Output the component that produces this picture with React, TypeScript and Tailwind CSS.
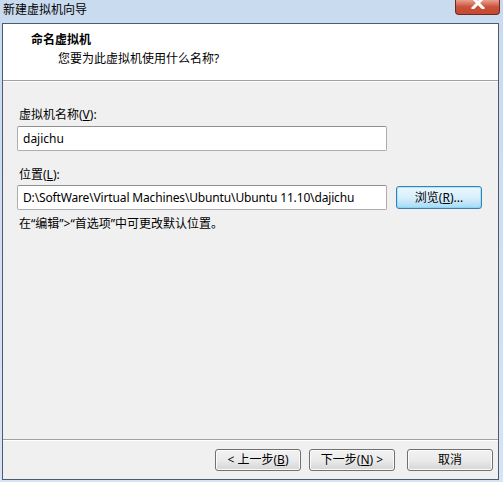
import React from "react";

const font = { fontFamily: '"Noto Sans", "Noto Sans CJK SC", sans-serif' };

function Btn({ children, className = "" }: { children: React.ReactNode; className?: string }) {
  return (
    <div
      className={
        "flex items-center justify-center rounded-[3px] border border-[#707070] bg-gradient-to-b from-[#f2f2f2] via-[#ebebeb] to-[#d5d5d5] text-[12px] text-black shadow-[inset_0_0_0_1px_#fbfbfb] " +
        className
      }
    >
      {children}
    </div>
  );
}

export default function App() {
  return (
    <div
      className="relative h-[482px] w-[503px] overflow-hidden bg-gradient-to-b from-[#c9dbef] to-[#d6e4f3] text-black"
      style={font}
    >
      <div className="flex h-[23px] items-start pl-[3px] pt-[2px] text-[12px] leading-[16px] text-black">
        新建虚拟机向导
      </div>
      <div className="absolute right-[3px] top-0 flex h-[15px] w-[45px] items-start justify-center overflow-hidden rounded-b-[4px] border border-t-0 border-[#6b2a22] bg-gradient-to-b from-[#e8a08e] via-[#c9503a] to-[#c44a30]">
        <svg width="14" height="12" viewBox="0 0 14 12" className="-mt-[3px]">
          <path d="M2 1 L12 11 M12 1 L2 11" stroke="#ffffff" strokeWidth="3" strokeLinecap="square" />
        </svg>
      </div>
      <div className="mx-[2px] flex h-[457px] w-[497px] flex-col border border-[#4b5c72] bg-[#f0f0f0]">
        <div className="h-[57px] border-b border-[#a0a0a0] bg-white pl-[28px] pt-[8px]">
          <div className="text-[12px] font-bold leading-[16px]">命名虚拟机</div>
          <div className="pl-[27px] pt-[3px] text-[12px] leading-[16px]">您要为此虚拟机使用什么名称?</div>
        </div>
        <div className="flex flex-1 flex-col border-t border-white pl-[14px] pt-[25px] text-[12px]">
          <div className="pl-[2px] leading-[16px]">
            虚拟机名称(<span className="underline">V</span>):
          </div>
          <div className="mt-[3px] flex h-[25px] w-[370px] items-center rounded-[2px] border border-[#abadb3] border-t-[#8e8f8f] bg-white pl-[5px] text-[12px]">
            dajichu
          </div>
          <div className="mt-[16px] pl-[2px] leading-[16px]">
            位置(<span className="underline">L</span>):
          </div>
          <div className="mt-[2px] flex items-center gap-[9px]">
            <div className="flex h-[25px] w-[370px] items-center rounded-[2px] border border-[#abadb3] border-t-[#8e8f8f] bg-white pl-[5px] text-[12px] tracking-[-0.15px] whitespace-nowrap">
              D:\SoftWare\Virtual Machines\Ubuntu\Ubuntu 11.10\dajichu
            </div>
            <div className="flex h-[23px] w-[86px] items-center justify-center rounded-[3px] border border-[#3c7fb1] bg-gradient-to-b from-[#eaf6fd] via-[#d9f0fc] to-[#a7d9f5] text-[12px] shadow-[inset_0_0_0_1px_#48d7fb66]">
              浏览(<span className="underline">R</span>)...
            </div>
          </div>
          <div className="mt-[6px] pl-[2px] leading-[16px]">在“编辑”&gt;“首选项”中可更改默认位置。</div>
        </div>
        <div className="flex h-[40px] items-start justify-end gap-[8px] border-t border-[#a0a0a0] pr-[5px] pt-[9px] shadow-[inset_0_1px_0_#ffffff]">
          <Btn className="h-[22px] w-[86px]">
            &lt; 上一步(<span className="underline">B</span>)
          </Btn>
          <Btn className="h-[22px] w-[86px]">
            下一步(<span className="underline">N</span>) &gt;
          </Btn>
          <Btn className="ml-[4px] h-[22px] w-[86px]">取消</Btn>
        </div>
      </div>
    </div>
  );
}
